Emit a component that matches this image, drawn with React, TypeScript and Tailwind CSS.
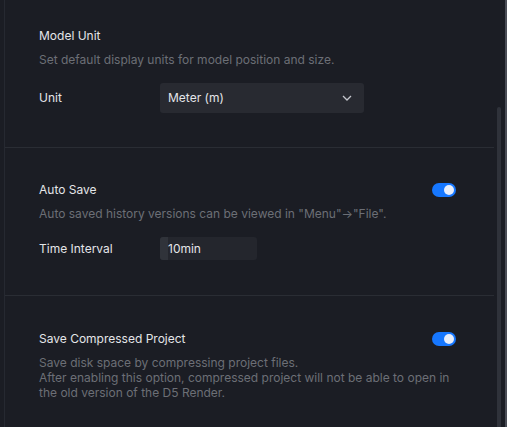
import React from 'react';

const Toggle = () => (
  <div className="flex h-[14px] w-[24px] items-center justify-end rounded-full bg-[#1677ff] pr-[2px]">
    <div className="h-[10px] w-[10px] rounded-full bg-[#e8eefb]" />
  </div>
);

const Section = ({
  title,
  desc,
  toggle,
  children,
  className,
}: {
  title: string;
  desc: React.ReactNode;
  toggle?: boolean;
  children?: React.ReactNode;
  className: string;
}) => (
  <div className={`border-b border-[#2a2d34] pl-[34px] pr-[38px] ${className}`}>
    <div className="flex h-[18px] items-center justify-between">
      <span className="text-[12px] text-[#e4e5e8]">{title}</span>
      {toggle ? <Toggle /> : null}
    </div>
    <div className="mt-[7px] text-[12px] leading-[15px] text-[#6c6f76]">{desc}</div>
    {children}
  </div>
);

export default function App() {
  return (
    <div
      className="flex h-[427px] w-[507px] overflow-hidden bg-[#1b1d24]"
      style={{ fontFamily: 'Inter, "Noto Sans", sans-serif' }}
    >
      <div className="w-[4px] shrink-0" />
      <div className="relative flex-1 border-l border-[#262931]">
        <div className="w-[489px]">
          <Section
            className="pt-[27px] pb-[34px]"
            title="Model Unit"
            desc="Set default display units for model position and size."
          >
            <div className="mt-[16px] flex items-center">
              <span className="w-[121px] text-[12px] text-[#e4e5e8]">Unit</span>
              <div className="flex h-[30px] w-[204px] items-center justify-between rounded-[3px] bg-[#282a31] pl-[8px] pr-[12px]">
                <span className="text-[12px] text-[#e4e5e8]">Meter (m)</span>
                <svg width="10" height="6" viewBox="0 0 10 6" fill="none">
                  <path d="M1 1l4 4 4-4" stroke="#c4c6cc" strokeWidth="1.3" />
                </svg>
              </div>
            </div>
          </Section>
          <Section
            className="pt-[33px] pb-[35px]"
            title="Auto Save"
            toggle
            desc={'Auto saved history versions can be viewed in "Menu"\u2192"File".'}
          >
            <div className="mt-[16px] flex items-center">
              <span className="w-[121px] text-[12px] text-[#e4e5e8]">Time Interval</span>
              <div className="flex h-[23px] w-[97px] items-center rounded-[3px] bg-[#24262d]">
                <div className="h-full w-[8px] rounded-l-[3px] bg-[#30333a]" />
                <span className="text-[12px] text-[#e4e5e8]">10min</span>
              </div>
            </div>
          </Section>
          <Section
            className="pt-[34px] pb-[40px]"
            title="Save Compressed Project"
            toggle
            desc={
              <>
                Save disk space by compressing project files.
                <br />
                After enabling this option, compressed project will not be able to open in the old version of the D5
                Render.
              </>
            }
          />
        </div>
        <div className="absolute left-[492px] top-[107px] bottom-0 w-[4px] rounded-t-[2px] bg-[#2f323a]" />
      </div>
      <div className="w-[2px] shrink-0 bg-[#4a4d56]" />
    </div>
  );
}
